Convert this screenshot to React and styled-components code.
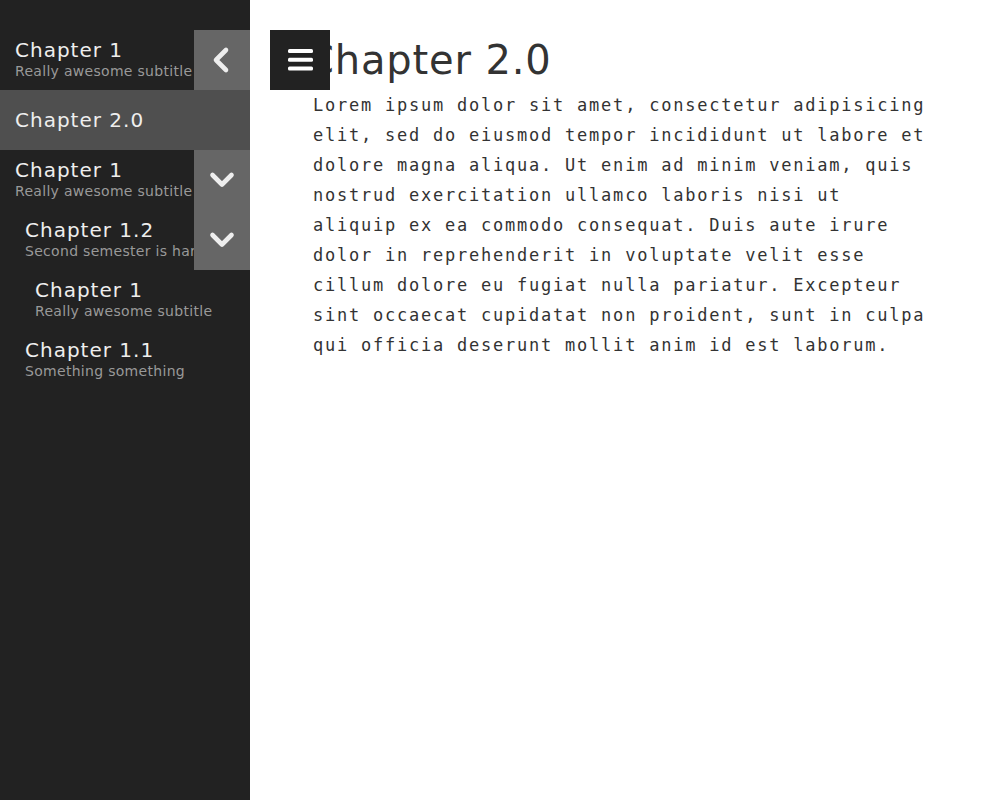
import React from 'react';
import styled, { createGlobalStyle } from 'styled-components';

const GlobalStyle = createGlobalStyle`
  body {
    margin: 0;
    background: #fff;
    font-family: "DejaVu Sans", sans-serif;
  }
`;

const Layout = styled.div`
  display: flex;
  min-height: 100vh;
`;

const Sidebar = styled.nav`
  width: 250px;
  flex-shrink: 0;
  background: #222;
  padding-top: 30px;
`;

const Row = styled.div`
  display: flex;
  height: 60px;
  background: ${(p) => (p.$active ? '#4f4f4f' : 'transparent')};
`;

const ItemText = styled.div`
  flex: 1;
  min-width: 0;
  display: flex;
  flex-direction: column;
  justify-content: center;
  padding-left: ${(p) => 15 + p.$depth * 10}px;
  padding-bottom: ${(p) => (p.$sub ? 2 : 0)}px;
  overflow: hidden;
  white-space: nowrap;
`;

const Title = styled.div`
  font-size: 20px;
  line-height: 24px;
  letter-spacing: 1px;
  color: #eee;
`;

const Subtitle = styled.div`
  font-size: 14px;
  line-height: 18px;
  letter-spacing: 0.3px;
  color: #999;
`;

const ToggleButton = styled.button`
  width: 56px;
  flex-shrink: 0;
  border: none;
  padding: 0;
  background: #666;
  color: #eee;
  display: flex;
  align-items: center;
  justify-content: center;
  cursor: pointer;
`;

const Main = styled.main`
  flex: 1;
  position: relative;
  padding: 30px 0 0 56px;
`;

const MenuButton = styled.button`
  position: absolute;
  top: 30px;
  left: 20px;
  width: 60px;
  height: 60px;
  border: none;
  padding: 0;
  background: #222;
  color: #fff;
  display: flex;
  align-items: center;
  justify-content: center;
  cursor: pointer;
`;

const Heading = styled.h1`
  margin: 0;
  font-size: 40px;
  font-weight: normal;
  line-height: 60px;
  letter-spacing: 0.85px;
  color: #333;
`;

const Text = styled.p`
  margin: 0 0 0 7px;
  width: 618px;
  font-family: "DejaVu Sans Mono", monospace;
  font-size: 17px;
  line-height: 30px;
  letter-spacing: 1.77px;
  color: #333;
`;

const Chevron = ({ dir }) => (
  <svg width="30" height="30" viewBox="0 0 30 30" fill="none" stroke="currentColor"
    strokeWidth="4.6" strokeLinecap="round" strokeLinejoin="round">
    {dir === 'left'
      ? <polyline points="19,5 9,15 19,25" />
      : <polyline points="5.5,10 15,19.5 24.5,10" />}
  </svg>
);

const Bars = () => (
  <svg width="25" height="22" viewBox="0 0 25 22" fill="currentColor">
    <rect x="0" y="0" width="25" height="4" rx="1.5" />
    <rect x="0" y="8.7" width="25" height="4" rx="1.5" />
    <rect x="0" y="17.4" width="25" height="4" rx="1.5" />
  </svg>
);

const items = [
  { title: 'Chapter 1', subtitle: 'Really awesome subtitle', depth: 0, toggle: 'left' },
  { title: 'Chapter 2.0', depth: 0, active: true },
  { title: 'Chapter 1', subtitle: 'Really awesome subtitle', depth: 0, toggle: 'down' },
  { title: 'Chapter 1.2', subtitle: 'Second semester is hard', depth: 1, toggle: 'down' },
  { title: 'Chapter 1', subtitle: 'Really awesome subtitle', depth: 2 },
  { title: 'Chapter 1.1', subtitle: 'Something something', depth: 1 },
];

const lorem =
  'Lorem ipsum dolor sit amet, consectetur adipisicing elit, sed do eiusmod tempor incididunt ut labore et dolore magna aliqua. Ut enim ad minim veniam, quis nostrud exercitation ullamco laboris nisi ut aliquip ex ea commodo consequat. Duis aute irure dolor in reprehenderit in voluptate velit esse cillum dolore eu fugiat nulla pariatur. Excepteur sint occaecat cupidatat non proident, sunt in culpa qui officia deserunt mollit anim id est laborum.';

const App = () => {
  return (
    <>
      <GlobalStyle />
      <Layout>
        <Sidebar>
          {items.map((item, i) => (
            <Row key={i} $active={item.active}>
              <ItemText $depth={item.depth} $sub={!!item.subtitle}>
                <Title>{item.title}</Title>
                {item.subtitle && <Subtitle>{item.subtitle}</Subtitle>}
              </ItemText>
              {item.toggle && (
                <ToggleButton>
                  <Chevron dir={item.toggle} />
                </ToggleButton>
              )}
            </Row>
          ))}
        </Sidebar>
        <Main>
          <MenuButton>
            <Bars />
          </MenuButton>
          <Heading>Chapter 2.0</Heading>
          <Text>{lorem}</Text>
        </Main>
      </Layout>
    </>
  );
};

export default App;
